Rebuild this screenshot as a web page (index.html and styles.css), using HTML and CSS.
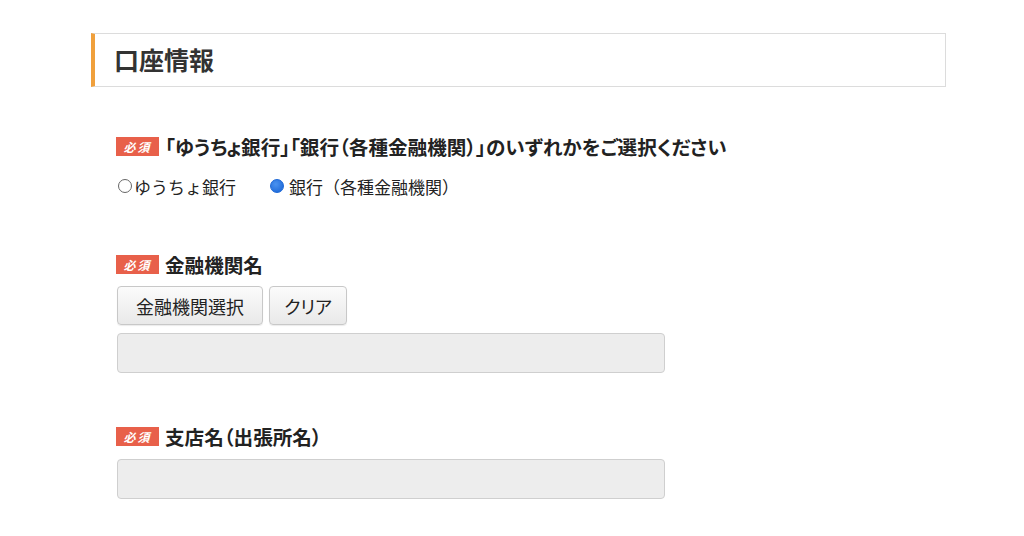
FILE: index.html
```html
<!DOCTYPE html>
<html lang="ja">
<head>
  <meta charset="UTF-8">
  <title>口座情報</title>
  <link rel="stylesheet" href="styles.css">
</head>
<body>
  <div class="page">
    <h2 class="section-title">口座情報</h2>

    <div class="form-body">
      <div class="field field-first">
        <div class="field-label"><span class="required">必須</span>「ゆうちょ銀行」「銀行（各種金融機関）」のいずれかをご選択ください</div>
        <div class="radio-row">
          <label class="radio"><input type="radio" name="bank_type" value="yucho">ゆうちょ銀行</label>
          <label class="radio"><input type="radio" name="bank_type" value="bank" checked>銀行（各種金融機関）</label>
        </div>
      </div>

      <div class="field field-bank">
        <div class="field-label"><span class="required">必須</span>金融機関名</div>
        <div class="btn-row">
          <button type="button" class="btn btn-select">金融機関選択</button>
          <button type="button" class="btn btn-clear">クリア</button>
        </div>
        <input type="text" class="text-input input-bank" readonly>
      </div>

      <div class="field field-branch">
        <div class="field-label"><span class="required">必須</span>支店名（出張所名）</div>
        <input type="text" class="text-input input-branch" readonly>
      </div>
    </div>
  </div>
</body>
</html>
```

FILE: styles.css
```css
body {
  margin: 0;
  background-color: #fff;
  font-family: "Noto Sans CJK JP", "Noto Sans", sans-serif;
  color: #333;
}

.page {
  width: 855px;
  margin-left: 91px;
  padding-top: 33px;
}

.section-title {
  box-sizing: border-box;
  height: 54px;
  margin: 0;
  padding-left: 19px;
  border: 1px solid #dcdcdc;
  border-left: 4px solid #f0a03c;
  font-size: 25px;
  font-weight: bold;
  line-height: 51px;
  color: #333;
}

.form-body {
  padding-left: 25px;
}

.field-first {
  margin-top: 47px;
}

.field-bank {
  margin-top: 54px;
}

.field-branch {
  margin-top: 51px;
}

.field-label {
  display: flex;
  align-items: center;
  height: 24px;
  font-size: 19.6px;
  font-weight: bold;
  font-feature-settings: "palt";
  color: #222;
}

.required {
  display: inline-block;
  flex: none;
  width: 43px;
  height: 19px;
  margin-right: 6px;
  background-color: #e8604a;
  color: #fff;
  font-size: 12px;
  font-style: italic;
  font-weight: bold;
  line-height: 19px;
  text-align: center;
  letter-spacing: 2px;
  font-feature-settings: normal;
}

.radio-row {
  display: flex;
  align-items: center;
  gap: 34px;
  height: 24px;
  margin-top: 16px;
  padding-left: 2px;
}

.radio {
  display: flex;
  align-items: center;
  font-size: 17px;
  color: #222;
}

.radio input {
  appearance: none;
  width: 14px;
  height: 14px;
  margin: 0 2px 0 0;
  border: 1px solid #666;
  border-radius: 50%;
  background-color: #fff;
}

.radio input:checked {
  border-color: #1a66d6;
  background: radial-gradient(circle at 40% 35%, #4a92f0, #1763d4);
  margin-right: 5px;
}

.btn-row {
  display: flex;
  gap: 6px;
  margin-top: 10px;
  padding-left: 1px;
}

.btn {
  height: 39px;
  padding: 0;
  border: 1px solid #c8c8c8;
  border-radius: 4px;
  background: linear-gradient(#fbfbfb, #e9e9e9);
  box-shadow: 0 1px 1px rgba(0,0,0,0.08);
  font-family: inherit;
  font-size: 18px;
  color: #222;
}

.btn-select {
  width: 146px;
}

.btn-clear {
  width: 78px;
  font-feature-settings: "palt";
}

.text-input {
  display: block;
  box-sizing: border-box;
  width: 548px;
  height: 40px;
  margin-left: 1px;
  border: 1px solid #cfcfcf;
  border-radius: 4px;
  background-color: #ededed;
}

.input-bank {
  margin-top: 8px;
}

.input-branch {
  margin-top: 11px;
}
```
